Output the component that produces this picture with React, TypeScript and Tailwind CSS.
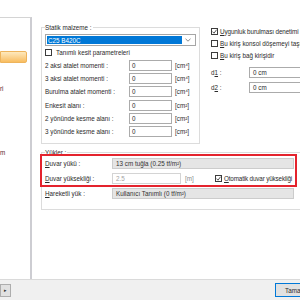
import React from 'react';

// Kiriş özellikleri penceresinin kırpılmış hali: statik malzeme + yükler grubu.

const U = ({ c }: { c: string }) => <span className="underline underline-offset-[1px]">{c}</span>;

function Check({ on }: { on?: boolean }) {
  return (
    <span className="flex h-[7px] w-[7px] shrink-0 items-center justify-center border border-[#3c3c3c] bg-white">
      {on && (
        <svg width="5" height="5" viewBox="0 0 10 10">
          <path d="M1 5.2 L4 8.4 L9.2 1.4" fill="none" stroke="#222" strokeWidth="1.5" />
        </svg>
      )}
    </span>
  );
}

const sections = [
  { label: '2 aksi atalet momenti :', unit: 'cm⁴' },
  { label: '3 aksi atalet momenti :', unit: 'cm⁴' },
  { label: 'Burulma atalet momenti :', unit: 'cm⁴' },
  { label: 'Enkesit alanı :', unit: 'cm²' },
  { label: '2 yönünde kesme alanı :', unit: 'cm²' },
  { label: '3 yönünde kesme alanı :', unit: 'cm²' },
];

export default function App() {
  return (
    <div className="relative flex h-[300px] w-[300px] flex-col overflow-hidden bg-white text-[6.3px] leading-[7px] text-[#2a2a2a] [font-family:'Liberation_Sans',Arial,sans-serif]">
      <div className="flex min-h-0 flex-1">
        {/* sol ağaç paneli */}
        <div className="mt-[17px] flex w-[32px] shrink-0 flex-col border-t border-r-2 border-t-[#d4d4d4] border-r-[#cdcdd2]">
          <div className="mt-[33px] h-[12px] w-[27px] rounded-r-[2px] border border-[#eeb45c] bg-linear-to-b from-[#fee9bd] to-[#f8bd5e]" />
          <div className="mt-[22px] whitespace-nowrap text-[#5c1a2a]">ri</div>
          <div className="mt-[57px] whitespace-nowrap text-[#5c1a2a]">m</div>
        </div>

        <div className="flex min-w-0 flex-1 flex-col pl-[9px]">
          <div className="mt-[27px] flex items-start">
            {/* statik malzeme */}
            <div className="w-[159px] shrink-0 border border-[#dcdcdc] pb-[6px] pl-[3px]">
              <div className="-mt-[4px] w-fit bg-white pr-[1px]">Statik malzeme :</div>
              <div className="mt-[3px] flex h-[12px] w-[151px] border border-[#a6a6a6] p-[1px]">
                <div className="flex flex-1 items-center bg-[#0078d7] pl-[1px] text-white">C25 B420C</div>
                <div className="flex w-[12px] items-center justify-center">
                  <svg width="6" height="4" viewBox="0 0 6 4">
                    <path d="M0.5 0.8 L3 3.2 L5.5 0.8" fill="none" stroke="#6b6b6b" strokeWidth="0.8" />
                  </svg>
                </div>
              </div>
              <div className="mt-[3px] flex h-[7px] items-center gap-[4px]">
                <Check />
                <span>Tanımlı kesit parametreleri</span>
              </div>
              <div className="mt-[4px] flex flex-col gap-[2.2px]">
                {sections.map((s) => (
                  <div key={s.label} className="flex h-[11px] items-center">
                    <span className="w-[84px] whitespace-nowrap">{s.label}</span>
                    <span className="flex h-[11px] w-[43px] items-center border border-[#ababab] pl-[2px]">0</span>
                    <span className="ml-[3px]">[{s.unit}]</span>
                  </div>
                ))}
              </div>
            </div>

            {/* sağ seçenekler */}
            <div className="ml-[11px] mt-[1px] flex flex-col whitespace-nowrap">
              <div className="flex flex-col gap-[5px]">
                <div className="flex h-[7px] items-center gap-[2px]">
                  <Check on />
                  <span className="tracking-[-0.1px]"><U c="U" />ygunluk burulması denetimi</span>
                </div>
                <div className="flex h-[7px] items-center gap-[2px]">
                  <Check />
                  <span><U c="B" />u kiriş konsol döşemeyi taşıyor</span>
                </div>
                <div className="flex h-[7px] items-center gap-[2px]">
                  <Check />
                  <span><U c="B" />u kiriş bağ kirişidir</span>
                </div>
              </div>
              <div className="mt-[8px] flex h-[11px] items-center">
                <span className="w-[38px]">d<U c="1" /> :</span>
                <span className="flex h-[11px] w-[60px] items-center border border-[#ababab] pl-[3px]">0 cm</span>
              </div>
              <div className="mt-[4px] flex h-[11px] items-center">
                <span className="w-[38px]">d<U c="2" /> :</span>
                <span className="flex h-[11px] w-[60px] items-center border border-[#ababab] pl-[3px]">0 cm</span>
              </div>
            </div>
          </div>

          {/* yükler */}
          <div className="mt-[8px] w-[262px] shrink-0 border border-[#dcdcdc] pb-[10px] pl-[3px]">
            <div className="-mt-[4px] w-fit bg-white pr-[1px]">Yükler :</div>
            <div className="relative mt-[2px]">
              <div className="flex h-[11px] items-center">
                <span className="w-[67px]"><U c="D" />uvar yükü :</span>
                <span className="flex h-[11px] w-[182px] items-center border border-[#cccccc] bg-[#e5e5e5] pl-[3px] text-[#333]">
                  13 cm tuğla (0.25 tf/m²)
                </span>
              </div>
              <div className="mt-[4px] flex h-[11px] items-center">
                <span className="w-[67px] whitespace-nowrap"><U c="D" />uvar yüksekliği :</span>
                <span className="flex h-[11px] w-[69px] items-center border border-[#d4d4d4] bg-white pl-[3px] text-[#a3a3a3]">2.5</span>
                <span className="ml-[4px] w-[30px] text-[#8c8c8c]">[m]</span>
                <div className="flex items-center gap-[2px] whitespace-nowrap">
                  <Check on />
                  <span className="tracking-[-0.15px]"><U c="O" />tomatik duvar yüksekliği</span>
                </div>
              </div>
              <div className="pointer-events-none absolute -top-[4px] -left-[5px] right-[5px] -bottom-[3px] border-2 border-[#e4232d]" />
            </div>
            <div className="mt-[4px] flex h-[11px] items-center">
              <span className="w-[67px]"><U c="H" />areketli yük :</span>
              <span className="flex h-[11px] w-[182px] items-center border border-[#cccccc] bg-[#e5e5e5] pl-[3px] text-[#333]">
                Kullanıcı Tanımlı (0 tf/m²)
              </span>
            </div>
          </div>
        </div>
      </div>

      {/* alt buton çubuğu */}
      <div className="flex h-[21px] shrink-0 items-center justify-between border-t border-[#dadada] bg-[#f0f0f0]">
        <div className="flex h-[13px] w-[11px] items-center justify-center border border-[#adadad] bg-[#e1e1e1] text-[5px] text-[#333]">▸</div>
        <div className="-mr-[5px] flex h-[14px] w-[30px] items-center border border-[#0078d7] bg-[#e1e1e1] pl-[9px]">Tamam</div>
      </div>
    </div>
  );
}
